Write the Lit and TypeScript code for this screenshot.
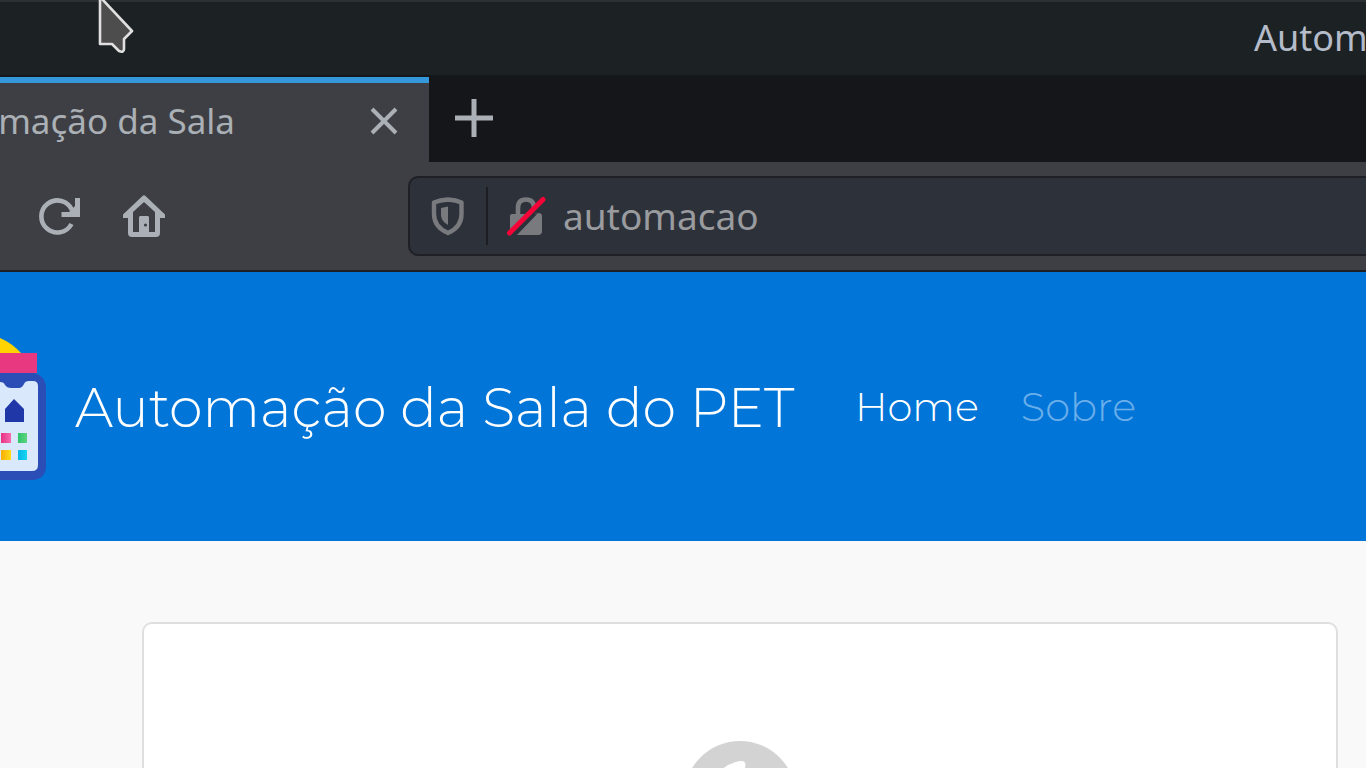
import { LitElement, html, css } from "lit";
import { customElement } from "lit/decorators.js";

@customElement("window-bar")
class WindowBar extends LitElement {
  static styles = css`
    :host {
      display: block;
      flex: none;
    }
    .bar {
      display: flex;
      justify-content: flex-end;
      box-sizing: border-box;
      height: 77px;
      border-top: 2px solid #2c3032;
      border-bottom: 2px solid #15181a;
      background: #1c2224;
      color: #b4bbc9;
      font: 36px/72px "Noto Sans", sans-serif;
    }
    .title {
      width: 112px;
      white-space: nowrap;
    }
    .pointer {
      position: absolute;
      left: 96px;
      top: 0;
      width: 40px;
      height: 56px;
    }
  `;
  render() {
    return html`
      <header class="bar">
        <span class="title">Autom</span>
      </header>
      <svg class="pointer" viewBox="0 0 40 56" aria-hidden="true">
        <path d="M4 -1V44H16L23 51Q28 53 28 49V39L36 31L6 -1Z" fill="#4d4d4d" stroke="#e0e0e0" stroke-width="2.6" stroke-linejoin="round" />
      </svg>
    `;
  }
}

@customElement("browser-chrome")
class BrowserChrome extends LitElement {
  static styles = css`
    :host {
      display: block;
      flex: none;
      font-family: "Noto Sans", sans-serif;
      color: #aab0b5;
    }
    button {
      display: flex;
      padding: 0;
      border: 0;
      background: none;
      color: inherit;
    }
    .tabs {
      display: flex;
      height: 85px;
      background: #15161a;
    }
    .tab {
      display: flex;
      align-items: center;
      justify-content: space-between;
      box-sizing: border-box;
      width: 429px;
      padding: 0 31px 4px 0;
      border-top: 6px solid #3498db;
      background: #3e3f44;
    }
    .label {
      display: flex;
      justify-content: flex-end;
      width: 235px;
      white-space: nowrap;
      font-size: 35px;
      line-height: 48px;
    }
    .add {
      align-items: center;
      padding: 0 0 4px 25px;
    }
    .tools {
      display: flex;
      align-items: center;
      box-sizing: border-box;
      height: 110px;
      padding-left: 38px;
      border-bottom: 2px solid #1c2025;
      background: #3e3f44;
    }
    .nav {
      display: flex;
      gap: 40px;
      width: 370px;
      flex: none;
    }
    .address {
      display: flex;
      align-items: center;
      flex: 1;
      min-width: 0;
      box-sizing: border-box;
      height: 80px;
      padding-left: 20px;
      border: 2px solid #1e2026;
      border-right: 0;
      border-radius: 10px 0 0 10px;
      background: #2d313a;
    }
    .split {
      width: 2px;
      height: 58px;
      margin: 0 18px 0 20px;
      background: #1c1d22;
    }
    .url {
      flex: 1;
      min-width: 0;
      margin-left: 17px;
      padding: 0;
      border: 0;
      outline: 0;
      background: none;
      color: #9a9b9e;
      font: 37px/50px "Noto Sans", sans-serif;
    }
  `;
  render() {
    return html`
      <div class="tabs">
        <div class="tab">
          <span class="label">mação da Sala</span>
          <button aria-label="Fechar aba">
            <svg width="28" height="28" viewBox="0 0 28 28">
              <path d="M2 2L26 26M26 2L2 26" stroke="currentColor" stroke-width="4" />
            </svg>
          </button>
        </div>
        <button class="add" aria-label="Nova aba">
          <svg width="40" height="40" viewBox="0 0 40 40">
            <path d="M20 1V39M1 20H39" stroke="currentColor" stroke-width="5" />
          </svg>
        </button>
      </div>
      <div class="tools">
        <div class="nav">
          <button aria-label="Recarregar">
            <svg width="44" height="44" viewBox="0 0 44 44" fill="none">
              <path d="M33.500 30A16 16 0 1 1 34 16" stroke="currentColor" stroke-width="4.600" />
              <path d="M37 4H42V23H23.500V18H31L37 12Z" fill="currentColor" />
            </svg>
          </button>
          <button aria-label="Página inicial">
            <svg width="44" height="44" viewBox="0 0 44 44" fill="none">
              <path d="M1 24V20.500L20.500 2Q22 0.500 23.500 2L43 20.500V24H38V39Q38 43 34 43H10Q6 43 6 39V24ZM11 18V38H17V24Q17 22 19 22H25Q27 22 27 24V38H33V18L22 8Z" fill="currentColor" fill-rule="evenodd" />
              <path d="M17 38H27V24Q27 22 25 22H19Q17 22 17 24Z" fill="currentColor" />
              <circle cx="23.500" cy="31" r="1.600" fill="#3e3f44" />
            </svg>
          </button>
        </div>
        <div class="address">
          <svg width="36" height="40" viewBox="0 0 36 40" fill="none" aria-hidden="true">
            <path d="M18 3.500Q26 4 31.500 6.500V18C31.500 28 25 34 18 37C11 34 4 28 4 18V6.500Q10 4 18 3.500Z" stroke="#797a7e" stroke-width="4.400" stroke-linejoin="round" />
            <path d="M18 10.500V29C13 26 11 23 11 18V12Z" fill="#797a7e" />
          </svg>
          <span class="split"></span>
          <svg width="40" height="40" viewBox="0 0 40 40" fill="none" aria-hidden="true">
            <path d="M12 20V12Q12 3.500 20 3.500Q28 3.500 28 12V18" stroke="#797a7e" stroke-width="4.600" />
            <path d="M6 18H24L4 36V20Q4 18 6 18Z" fill="#797a7e" />
            <path d="M32 17Q36 17 36 20V35Q36 39 32 39H11Z" fill="#797a7e" />
            <path d="M5 40L39 6" stroke="#2d313a" stroke-width="3" />
            <path d="M3.500 37L37 3.500" stroke="#f50537" stroke-width="5" stroke-linecap="round" />
          </svg>
          <input class="url" type="text" aria-label="Endereço" value="automacao" />
        </div>
      </div>
    `;
  }
}

@customElement("site-page")
class SitePage extends LitElement {
  static styles = css`
    :host {
      display: flex;
      flex-direction: column;
      flex: 1;
      min-height: 0;
      background: #f9f9f9;
      font-family: Montserrat, Inter, sans-serif;
      font-weight: 300;
    }
    .navbar {
      display: flex;
      align-items: center;
      flex: none;
      height: 269px;
      background: #0275d8;
      white-space: nowrap;
    }
    .logo {
      display: block;
      flex: none;
      width: 75px;
      height: 144px;
    }
    a {
      text-decoration: none;
      color: #fff;
    }
    .brand {
      display: flex;
      align-items: center;
      width: 855px;
      flex: none;
      padding-top: 2px;
      font-size: 54px;
      line-height: 72px;
    }
    .links {
      display: flex;
      gap: 42px;
      font-size: 40px;
      line-height: 60px;
    }
    .muted {
      color: #6aaeea;
    }
    .content {
      display: flex;
      flex: 1;
      min-height: 0;
      padding: 81px 28px 0 142px;
    }
    .card {
      flex: 1;
      box-sizing: border-box;
      display: flex;
      justify-content: center;
      overflow: hidden;
      padding-top: 117px;
      border: 2px solid #dfdfdf;
      border-bottom: 0;
      border-radius: 10px 10px 0 0;
      background: #fff;
    }
    .bulb {
      display: block;
      flex: none;
      width: 112px;
      height: 112px;
    }
  `;
  render() {
    return html`
      <nav class="navbar">
        <a class="brand" href="#">
          <svg class="logo" viewBox="0 336 75 144" aria-hidden="true">
            <defs>
              <linearGradient id="pk"><stop stop-color="#e83182" /><stop offset="1" stop-color="#f56db0" /></linearGradient>
              <linearGradient id="gr"><stop stop-color="#2fc46c" /><stop offset="1" stop-color="#5ed37f" /></linearGradient>
              <linearGradient id="or"><stop stop-color="#f8ad05" /><stop offset="1" stop-color="#ffdc1b" /></linearGradient>
              <linearGradient id="cy"><stop stop-color="#08b4e8" /><stop offset="1" stop-color="#16d6ef" /></linearGradient>
            </defs>
            <path d="M0 338Q12 343 22 354H0Z" fill="#ffd400" />
            <path d="M0 373H34Q46 376 46 389V465Q46 480 31 480H0Z" fill="#2b4db6" />
            <rect y="353" width="37" height="20" fill="#e83880" />
            <path d="M0 382Q4 382 5 385Q7 388 11 388H19Q22 388 24 384Q25 381 29 381H33Q38 381 38 386V465Q38 471 32 471H0Z" fill="#d9e8fa" />
            <path d="M14 399L24 409V422H5V409Z" fill="#2037a8" />
            <rect x="1" y="433" width="10" height="10" fill="url(#pk)" />
            <rect x="18" y="433" width="9" height="10" fill="url(#gr)" />
            <rect x="1" y="450" width="10" height="10" fill="url(#or)" />
            <rect x="18" y="450" width="9" height="10" fill="url(#cy)" />
          </svg>
          <span>Automação da Sala do PET</span>
        </a>
        <div class="links">
          <a href="#home">Home</a>
          <a class="muted" href="#sobre">Sobre</a>
        </div>
      </nav>
      <main class="content">
        <section class="card" aria-label="Lâmpada">
          <svg class="bulb" viewBox="0 0 112 112" aria-hidden="true">
            <circle cx="56" cy="56" r="56" fill="#d3d3d3" />
            <path d="M56 20Q63 19 61 27V40H31Q36 24 56 20Z" fill="#fff" />
          </svg>
        </section>
      </main>
    `;
  }
}

@customElement("app-root")
class AppRoot extends LitElement {
  static styles = css`
    :host {
      display: flex;
      flex-direction: column;
      height: 100vh;
      overflow: hidden;
      position: relative;
    }
  `;
  render() {
    return html`
      <window-bar></window-bar>
      <browser-chrome></browser-chrome>
      <site-page></site-page>
    `;
  }
}
